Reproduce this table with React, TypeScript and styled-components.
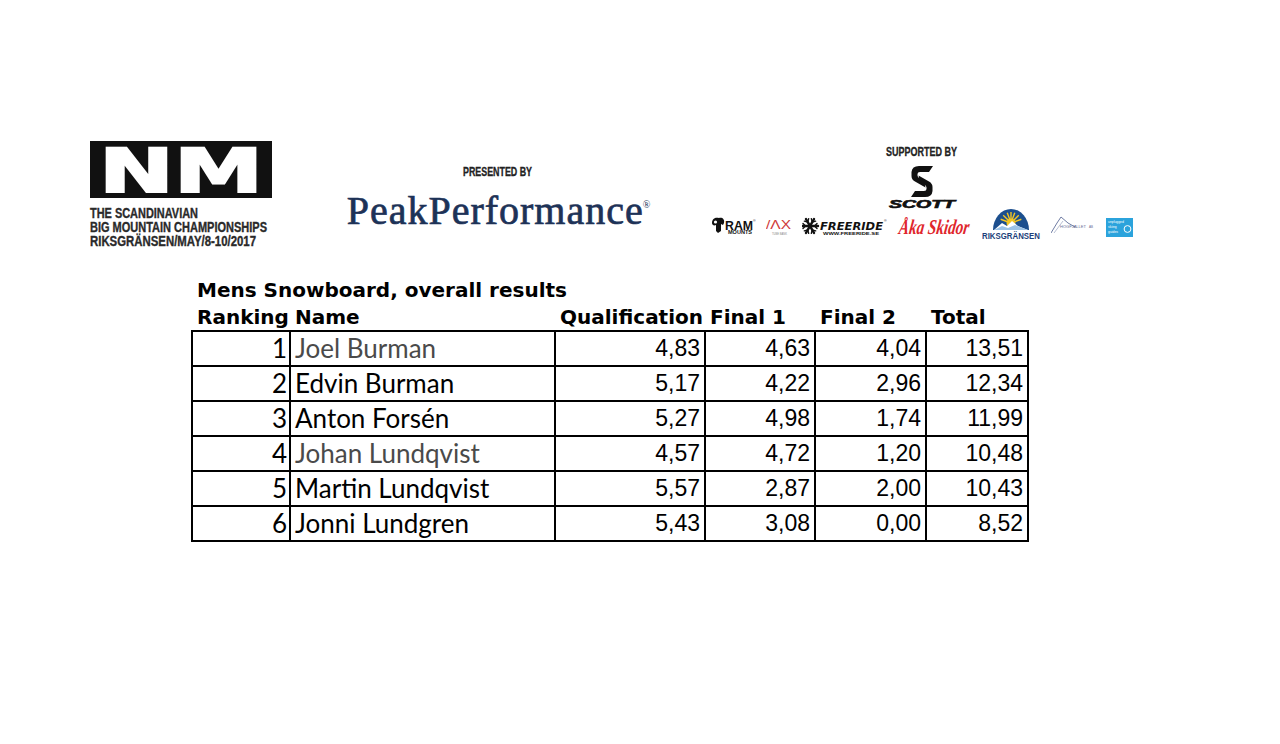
import * as React from "react";
import styled, { createGlobalStyle } from "styled-components";

const GlobalStyle = createGlobalStyle`
  html, body {
    margin: 0;
    padding: 0;
    background: #fff;
  }
  body {
    font-family: "Liberation Sans", Arial, sans-serif;
    color: #000;
  }
`;

const COLUMNS = "98px 265px 150px 110px 111px 102px";

const Page = styled.div`
  width: 1280px;
  height: 744px;
  box-sizing: border-box;
  padding: 141px 0 0 90px;
  overflow: hidden;
`;

const Header = styled.header`
  display: flex;
  align-items: flex-start;
`;

const NmBlock = styled.div`
  width: 182px;
  display: flex;
  flex-direction: column;
`;

const Tagline = styled.div`
  margin-top: 8px;
  display: flex;
  flex-direction: column;
`;

const PresentedBlock = styled.div`
  margin: 23px 0 0 75px;
  width: 303px;
  display: flex;
  flex-direction: column;
  align-items: center;
`;

const PeakLogo = styled.div`
  margin-top: 7px;
  font-family: "Liberation Serif", "Times New Roman", serif;
  font-size: 40px;
  line-height: 40px;
  letter-spacing: 1px;
  color: #1d3257;
  -webkit-text-stroke: 0.7px #1d3257;
  white-space: nowrap;
`;

const Registered = styled.span`
  font-size: 10px;
  letter-spacing: 0;
  -webkit-text-stroke: 0;
  vertical-align: 16px;
  margin-left: -1px;
`;

const SupportedBlock = styled.div`
  margin: 3px 0 0 61px;
  width: 422px;
  display: flex;
  flex-direction: column;
  align-items: center;
`;

const ScottMark = styled.svg`
  margin-top: 8px;
  overflow: visible;
`;

const SponsorRow = styled.div`
  display: flex;
  align-items: flex-start;
  gap: 9px;
  height: 34px;
  align-self: stretch;
`;

const Results = styled.section`
  margin: 30px 0 0 101px;
  width: 838px;
`;

const Title = styled.h1`
  margin: 0;
  padding-left: 6px;
  font-family: "DejaVu Sans", sans-serif;
  font-weight: bold;
  font-size: 20px;
  line-height: 24px;
`;

const LabelRow = styled.div`
  display: grid;
  grid-template-columns: ${COLUMNS};
  height: 28px;
  box-sizing: border-box;
  padding: 3px 0 0 2px;
  font-family: "DejaVu Sans", sans-serif;
  font-weight: bold;
  font-size: 20px;
  line-height: 24px;
  white-space: nowrap;
`;

const Label = styled.div`
  padding-left: 4px;
`;

const ScoreGrid = styled.div`
  display: grid;
  grid-template-columns: ${COLUMNS};
  width: max-content;
  border-top: 2px solid #000;
  border-left: 2px solid #000;
`;

const Cell = styled.div`
  height: 35px;
  box-sizing: border-box;
  border-right: 2px solid #000;
  border-bottom: 2px solid #000;
  white-space: nowrap;
  overflow: hidden;
`;

const RankCell = styled(Cell)`
  text-align: right;
  padding-right: 2px;
  font-family: Lato, "Open Sans", sans-serif;
  font-size: 26px;
  line-height: 32px;
`;

const NameCell = styled(Cell)<{ $muted?: boolean }>`
  padding-left: 4px;
  font-family: Lato, "Open Sans", sans-serif;
  font-size: 26px;
  line-height: 32px;
  color: ${(p) => (p.$muted ? "#4a4a4a" : "#000")};
`;

const ScoreCell = styled(Cell)`
  text-align: right;
  padding-right: 4px;
  font-family: "Liberation Sans", Arial, sans-serif;
  font-size: 23px;
  line-height: 33px;
`;

// narrow caps text squeezed to a fixed width, as in the printed logos
const Squeezed = ({
  text,
  width,
  size = 13,
  color = "#2a2a2a",
}: {
  text: string;
  width: number;
  size?: number;
  color?: string;
}) => (
  <svg width={width + 2} height={14} style={{ display: "block", overflow: "visible" }}>
    <text
      x={0}
      y={12}
      textLength={width}
      lengthAdjust="spacingAndGlyphs"
      fontFamily="Liberation Sans, Arial, sans-serif"
      fontWeight="bold"
      fontSize={size}
      fill={color}
      stroke={color}
      strokeWidth={0.35}
    >
      {text}
    </text>
  </svg>
);

const NmMark = () => (
  <svg width={182} height={57} style={{ display: "block" }}>
    <rect width={182} height={57} fill="#111" />
    <text
      x={9}
      y={51}
      textLength={164}
      lengthAdjust="spacingAndGlyphs"
      fontFamily="DejaVu Sans, sans-serif"
      fontWeight="bold"
      fontSize={60}
      fill="#fff"
      stroke="#fff"
      strokeWidth={2}
    >
      NM
    </text>
  </svg>
);

const S_PATH =
  "M22 0 L8 0 Q1 0 0.5 6 L0.5 10 Q0.5 13.5 4 15.5 L14.5 21.5 L13 14.5 L8.5 12.2 Q6.5 11.2 6.5 9.5 L6.5 8 Q6.5 6 9 6 L18 6 Z";

const ScottLogo = () => (
  <ScottMark width={70} height={42}>
    <g transform="translate(24 0)" fill="#111">
      <path d={S_PATH} />
      <path d={S_PATH} transform="rotate(180 11 15.5)" />
    </g>
    <text
      x={2}
      y={42}
      textLength={66}
      lengthAdjust="spacingAndGlyphs"
      fontFamily="Liberation Sans, Arial, sans-serif"
      fontWeight="bold"
      fontStyle="italic"
      fontSize={10}
      fill="#111"
      stroke="#111"
      strokeWidth={0.6}
    >
      SCOTT
    </text>
  </ScottMark>
);

const RamLogo = () => (
  <svg width={46} height={34}>
    <path
      d="M1 15 C1 10 5 9 8 10 C11 9 14 11 13 15 L12 17 L10 16 L10 23 L7 25 L5 23 L5 17 C3 18 1 17 1 15 Z"
      fill="#111"
    />
    <circle cx={4.5} cy={14} r={1.6} fill="#fff" />
    <text x={14} y={21.5} textLength={28} lengthAdjust="spacingAndGlyphs" fontFamily="Liberation Sans, sans-serif" fontWeight="bold" fontSize={13} fill="#111">
      RAM
    </text>
    <text x={42} y={14} fontSize={3.5} fontFamily="Liberation Sans, sans-serif" fill="#111">®</text>
    <text x={17} y={26} textLength={24} lengthAdjust="spacingAndGlyphs" fontFamily="Liberation Sans, sans-serif" fontWeight="bold" fontSize={4.5} fill="#111">
      MOUNTS
    </text>
  </svg>
);

const LaxLogo = () => (
  <svg width={27} height={34}>
    <text x={0} y={21} textLength={25} lengthAdjust="spacingAndGlyphs" fontFamily="Liberation Sans, sans-serif" fontSize={13} fill="#cf3a3a">
      /ΛX
    </text>
    <text x={6} y={27} textLength={15} lengthAdjust="spacingAndGlyphs" fontFamily="Liberation Sans, sans-serif" fontSize={3} fill="#888">
      TUBE BANK
    </text>
  </svg>
);

const Flake = () => (
  <g transform="translate(8 18)" stroke="#111" strokeLinecap="round">
    {[0, 60, 120].map((a) => (
      <line key={a} x1={-8} y1={0} x2={8} y2={0} strokeWidth={2.4} transform={`rotate(${a})`} />
    ))}
    {[0, 60, 120, 180, 240, 300].map((a) => (
      <g key={a} transform={`rotate(${a})`} strokeWidth={1.4}>
        <line x1={4.5} y1={0} x2={7} y2={-2.5} />
        <line x1={4.5} y1={0} x2={7} y2={2.5} />
      </g>
    ))}
  </g>
);

const FreerideLogo = () => (
  <svg width={86} height={34}>
    <Flake />
    <text x={18} y={21.5} textLength={63} lengthAdjust="spacingAndGlyphs" fontFamily="DejaVu Sans, sans-serif" fontWeight="bold" fontStyle="italic" fontSize={11} fill="#111">
      FREERIDE
    </text>
    <text x={82} y={14} fontSize={3.5} fill="#111">®</text>
    <text x={21} y={26.5} textLength={56} lengthAdjust="spacingAndGlyphs" fontFamily="Liberation Sans, sans-serif" fontWeight="bold" fontSize={4.2} fill="#111">
      WWW.FREERIDE.SE
    </text>
  </svg>
);

const AkaLogo = () => (
  <svg width={76} height={34}>
    <text
      x={0}
      y={26}
      textLength={70}
      lengthAdjust="spacingAndGlyphs"
      fontFamily="Liberation Serif, serif"
      fontWeight="bold"
      fontStyle="italic"
      fontSize={21}
      fill="#e0262c"
      transform="skewX(-8) translate(5 0)"
    >
      Åka Skidor
    </text>
  </svg>
);

const RiksLogo = () => (
  <svg width={60} height={34}>
    <path d="M11 22 A18 21 0 0 1 47 22 Z" fill="#1c4f8e" />
    <g stroke="#f3c623" strokeWidth={1.4}>
      {[-70, -45, -20, 0, 20, 45, 70].map((a) => (
        <line key={a} x1={29} y1={15} x2={29} y2={4} transform={`rotate(${a} 29 15)`} />
      ))}
    </g>
    <circle cx={29} cy={15} r={4.5} fill="#f3c623" />
    <path d="M12 22 L20 15 L25 18 L30 13 L36 18 L46 22 Z" fill="#fff" />
    <path d="M12 22 L20 18 L26 20 L33 17 L46 22 Z" fill="#9cc3e6" />
    <text x={0} y={31} textLength={58} lengthAdjust="spacingAndGlyphs" fontFamily="Liberation Sans, sans-serif" fontWeight="bold" fontSize={9} fill="#1d3f7a">
      RIKSGRÄNSEN
    </text>
  </svg>
);

const HogLogo = () => (
  <svg width={46} height={34}>
    <polyline points="0,25 6,15 10,9 17,15 24,19" fill="none" stroke="#6f7ca3" strokeWidth={1} />
    <polyline points="3,25 9,17 12,13" fill="none" stroke="#a4adc8" strokeWidth={0.8} />
    <text x={9} y={19.5} textLength={26} lengthAdjust="spacingAndGlyphs" fontFamily="Liberation Sans, sans-serif" fontSize={3.6} fill="#5f6b92">
      HÖGFJÄLLET
    </text>
    <text x={38} y={19.5} fontFamily="Liberation Sans, sans-serif" fontSize={3} fill="#5f6b92">AB</text>
  </svg>
);

const BlueLogo = () => (
  <svg width={27} height={34}>
    <rect x={0} y={10} width={27} height={19} fill="#2ba3dc" />
    <g fontFamily="Liberation Sans, sans-serif" fontSize={3.4} fill="#fff">
      <text x={2} y={15}>unplugged</text>
      <text x={2} y={20}>skiing</text>
      <text x={2} y={25}>guides</text>
    </g>
    <circle cx={21.5} cy={21} r={3.4} fill="none" stroke="#fff" strokeWidth={1} />
  </svg>
);

type Result = {
  rank: number;
  name: string;
  muted?: boolean;
  qualification: string;
  final1: string;
  final2: string;
  total: string;
};

const results: Result[] = [
  { rank: 1, name: "Joel Burman", muted: true, qualification: "4,83", final1: "4,63", final2: "4,04", total: "13,51" },
  { rank: 2, name: "Edvin Burman", qualification: "5,17", final1: "4,22", final2: "2,96", total: "12,34" },
  { rank: 3, name: "Anton Forsén", qualification: "5,27", final1: "4,98", final2: "1,74", total: "11,99" },
  { rank: 4, name: "Johan Lundqvist", muted: true, qualification: "4,57", final1: "4,72", final2: "1,20", total: "10,48" },
  { rank: 5, name: "Martin Lundqvist", qualification: "5,57", final1: "2,87", final2: "2,00", total: "10,43" },
  { rank: 6, name: "Jonni Lundgren", qualification: "5,43", final1: "3,08", final2: "0,00", total: "8,52" },
];

export default function App() {
  return (
    <Page>
      <GlobalStyle />
      <Header>
        <NmBlock>
          <NmMark />
          <Tagline>
            <Squeezed text="THE SCANDINAVIAN" width={108} size={14} />
            <Squeezed text="BIG MOUNTAIN CHAMPIONSHIPS" width={177} size={14} />
            <Squeezed text="RIKSGRÄNSEN/MAY/8-10/2017" width={166} size={14} />
          </Tagline>
        </NmBlock>

        <PresentedBlock>
          <Squeezed text="PRESENTED BY" width={69} color="#222" />
          <PeakLogo>
            PeakPerformance<Registered>®</Registered>
          </PeakLogo>
        </PresentedBlock>

        <SupportedBlock>
          <Squeezed text="SUPPORTED BY" width={71} color="#222" />
          <ScottLogo />
          <SponsorRow>
            <RamLogo />
            <LaxLogo />
            <FreerideLogo />
            <AkaLogo />
            <RiksLogo />
            <HogLogo />
            <BlueLogo />
          </SponsorRow>
        </SupportedBlock>
      </Header>

      <Results>
        <Title>Mens Snowboard, overall results</Title>
        <LabelRow>
          <Label>Ranking</Label>
          <Label>Name</Label>
          <Label>Qualification</Label>
          <Label>Final 1</Label>
          <Label>Final 2</Label>
          <Label>Total</Label>
        </LabelRow>
        <ScoreGrid>
          {results.map((r) => (
            <React.Fragment key={r.rank}>
              <RankCell>{r.rank}</RankCell>
              <NameCell $muted={r.muted}>{r.name}</NameCell>
              <ScoreCell>{r.qualification}</ScoreCell>
              <ScoreCell>{r.final1}</ScoreCell>
              <ScoreCell>{r.final2}</ScoreCell>
              <ScoreCell>{r.total}</ScoreCell>
            </React.Fragment>
          ))}
        </ScoreGrid>
      </Results>
    </Page>
  );
}
